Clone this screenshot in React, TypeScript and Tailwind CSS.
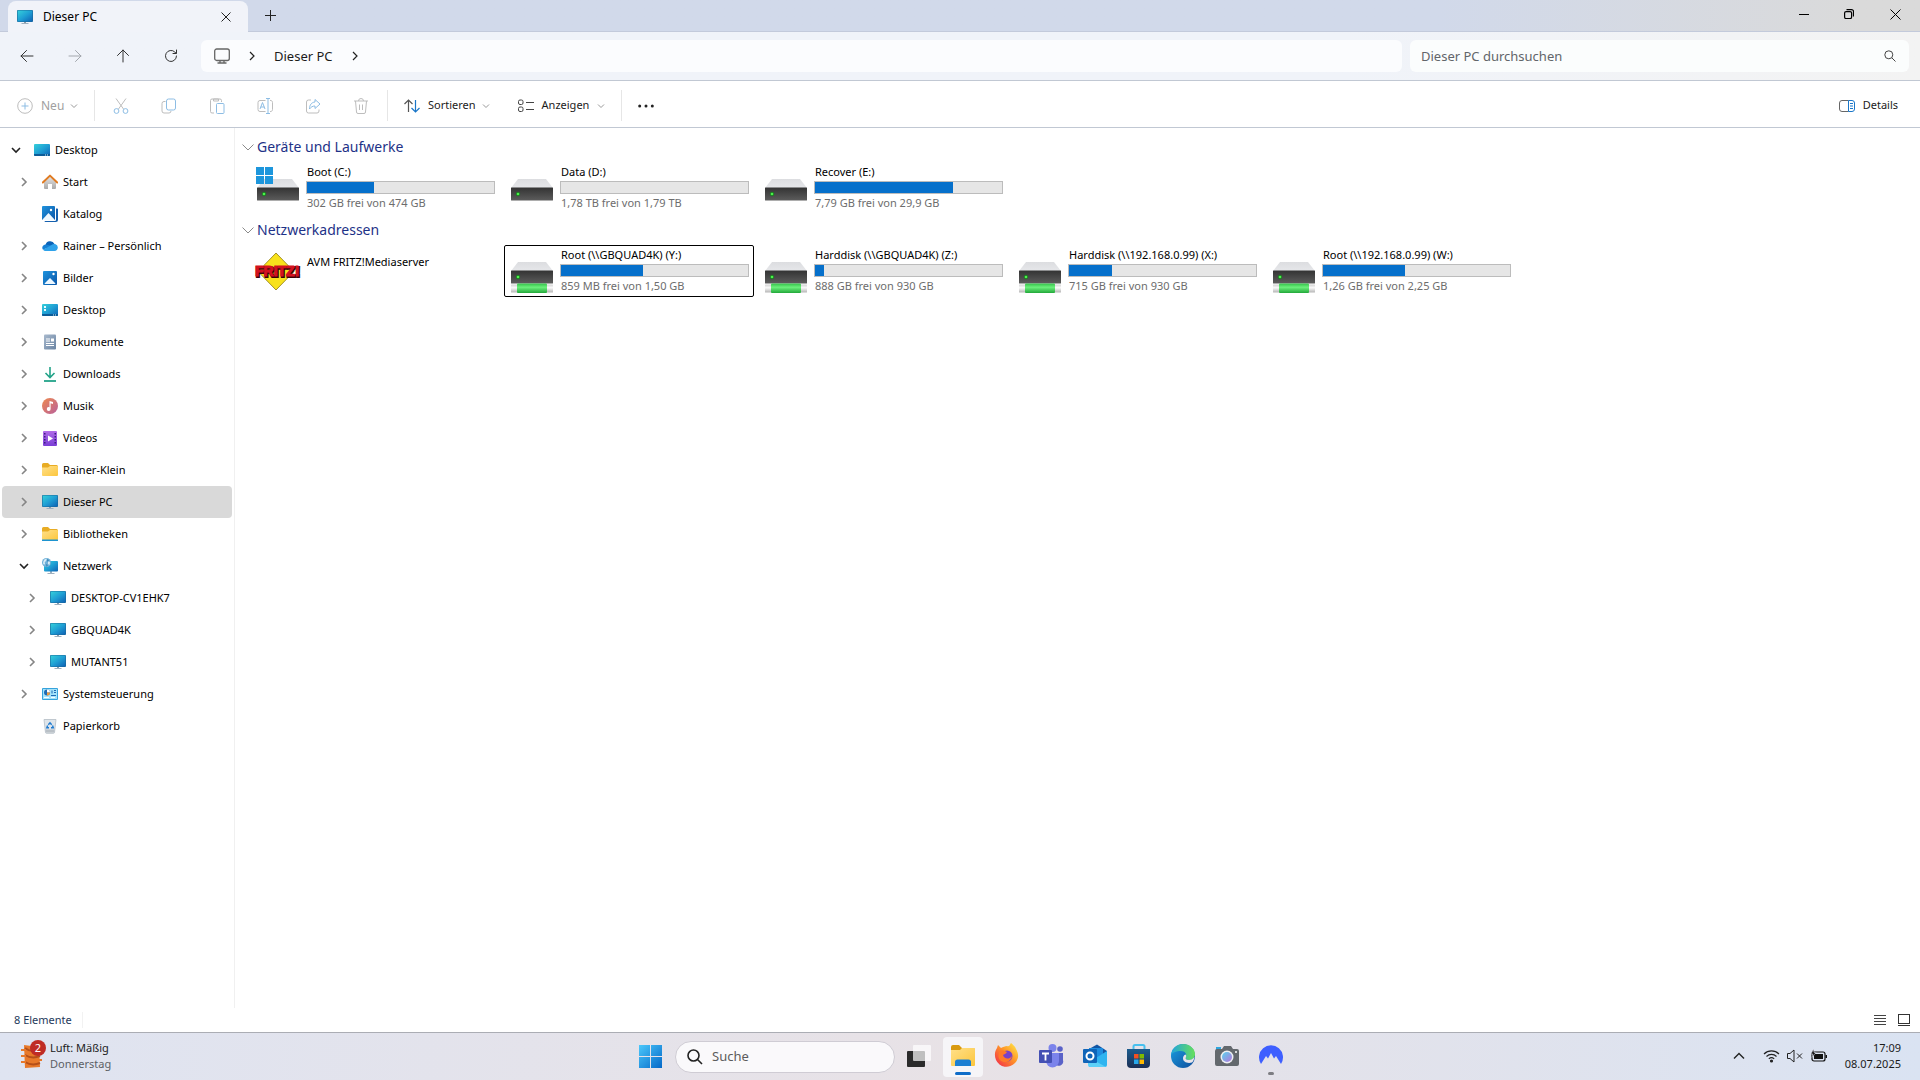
import type { ReactNode } from "react";

interface TreeNode {
  label: string;
  depth: 0 | 1 | 2;
  state: "open" | "closed" | "leaf";
  icon: ReactNode;
  selected?: boolean;
}

interface Volume {
  name: string;
  free?: string;
  used?: number;
  icon: ReactNode;
  focused?: boolean;
}

const indent = { 0: "pl-2", 1: "pl-4", 2: "pl-6" };

/* Shared vector definitions */
const Gradients = () => (
  <svg className="absolute h-0 w-0" aria-hidden="true">
    <defs>
      <linearGradient id="screen" x1="0" y1="0" x2="1" y2="1">
        <stop offset="0" stopColor="#35d0da" />
        <stop offset="0.5" stopColor="#1f9fd4" />
        <stop offset="1" stopColor="#0f62b4" />
      </linearGradient>
      <linearGradient id="folder" x1="0" y1="0" x2="1" y2="1">
        <stop offset="0" stopColor="#ffe08a" />
        <stop offset="1" stopColor="#fcc63d" />
      </linearGradient>
      <linearGradient id="photo" x1="0" y1="0" x2="1" y2="1">
        <stop offset="0" stopColor="#1f93dd" />
        <stop offset="1" stopColor="#0a55a8" />
      </linearGradient>
      <linearGradient id="music" x1="0" y1="0" x2="1" y2="1">
        <stop offset="0" stopColor="#ef8a4e" />
        <stop offset="1" stopColor="#b8609c" />
      </linearGradient>
      <linearGradient id="film" x1="0" y1="0" x2="0" y2="1">
        <stop offset="0" stopColor="#b06be8" />
        <stop offset="1" stopColor="#7a3ed6" />
      </linearGradient>
      <linearGradient id="sheet" x1="0" y1="0" x2="1" y2="1">
        <stop offset="0" stopColor="#a8b9cd" />
        <stop offset="1" stopColor="#6a84a3" />
      </linearGradient>
      <linearGradient id="house" x1="0" y1="0" x2="0" y2="1">
        <stop offset="0" stopColor="#e6e6e6" />
        <stop offset="1" stopColor="#a9a9a9" />
      </linearGradient>
      <linearGradient id="caseFront" x1="0" y1="0" x2="0" y2="1">
        <stop offset="0" stopColor="#333333" />
        <stop offset="1" stopColor="#5c5c5c" />
      </linearGradient>
      <linearGradient id="caseTop" x1="0" y1="0" x2="0" y2="1">
        <stop offset="0" stopColor="#dcdde0" />
        <stop offset="1" stopColor="#e6e7ea" />
      </linearGradient>
      <linearGradient id="cable" x1="0" y1="0" x2="0" y2="1">
        <stop offset="0" stopColor="#34c24a" />
        <stop offset="0.4" stopColor="#6cf07c" />
        <stop offset="1" stopColor="#22a83a" />
      </linearGradient>
      <linearGradient id="plug" x1="0" y1="0" x2="0" y2="1">
        <stop offset="0" stopColor="#d2d2d2" />
        <stop offset="0.4" stopColor="#fafafa" />
        <stop offset="1" stopColor="#b5b5b5" />
      </linearGradient>
      <linearGradient id="win" x1="0" y1="0" x2="1" y2="1">
        <stop offset="0" stopColor="#4cc8fb" />
        <stop offset="1" stopColor="#0468c8" />
      </linearGradient>
      <linearGradient id="fox" x1="1" y1="0" x2="0" y2="1">
        <stop offset="0" stopColor="#fff14a" />
        <stop offset="0.45" stopColor="#ff9528" />
        <stop offset="1" stopColor="#f0204e" />
      </linearGradient>
      <linearGradient id="edgeBody" x1="0" y1="0" x2="1" y2="1">
        <stop offset="0" stopColor="#1ba1e2" />
        <stop offset="1" stopColor="#0f4c9c" />
      </linearGradient>
      <linearGradient id="edgeWave" x1="0" y1="0" x2="1" y2="0">
        <stop offset="0" stopColor="#22a4dd" />
        <stop offset="1" stopColor="#66e05a" />
      </linearGradient>
      <linearGradient id="lens" x1="0" y1="0" x2="1" y2="1">
        <stop offset="0" stopColor="#58d4ee" />
        <stop offset="1" stopColor="#b774dc" />
      </linearGradient>
      <linearGradient id="bag" x1="0" y1="0" x2="0" y2="1">
        <stop offset="0" stopColor="#1c5c8e" />
        <stop offset="1" stopColor="#1b2f55" />
      </linearGradient>
    </defs>
  </svg>
);

/* Small 16px icons */
const PcIcon = () => (
  <svg width="16" height="16" viewBox="0 0 16 16">
    <path d="M7 12h2v2H7z" fill="#8a9aa8" />
    <path d="M4.500 14h7v1h-7z" fill="#9fb0bf" />
    <rect x="0" y="1" width="16" height="12" rx="1" fill="#1a6a9c" />
    <rect x="0.600" y="1.600" width="14.800" height="10.800" rx="0.500" fill="url(#screen)" />
  </svg>
);

const DesktopIcon = ({ items = false }: { items?: boolean }) => (
  <svg width="16" height="16" viewBox="0 0 16 16">
    <rect x="0" y="2" width="16" height="12" rx="1" fill="url(#screen)" />
    <path d="M0 12h16v1a1 1 0 0 1-1 1H1a1 1 0 0 1-1-1z" fill="#0c5c98" />
    <path d="M11 12.500h1v1h-1zM13 12.500h1v1h-1z" fill="#cfeefc" />
    {items && <path d="M2 4h2v2H2zM2 7h2v2H2z" fill="#e9fbff" />}
  </svg>
);

const HomeIcon = () => (
  <svg width="16" height="16" viewBox="0 0 16 16">
    <path d="M2 7.500 8 2l6 5.500V14a1 1 0 0 1-1 1h-3v-5H6v5H3a1 1 0 0 1-1-1z" fill="url(#house)" />
    <path d="M0.800 8.500 8 1.600l7.200 6.900" fill="none" stroke="#e07b22" strokeWidth="2" strokeLinejoin="round" strokeLinecap="round" />
  </svg>
);

const PhotoIcon = ({ stack = false }: { stack?: boolean }) => (
  <svg width="16" height="16" viewBox="0 0 16 16">
    {stack && <path d="M14 2.500h1.200a.8.800 0 0 1 .8.800V14a2 2 0 0 1-2 2H3.500a1 1 0 0 1-1-1H13a1 1 0 0 0 1-1z" fill="#1560ae" />}
    <rect x={stack ? 0 : 1} y={stack ? 0 : 1} width={stack ? 13 : 14} height="14" rx="1" fill="url(#photo)" />
    <path d={stack ? "M0.500 13.500 6.500 7l6 6.500-.5.500H1z" : "M2.500 13.500 8 8l5.500 5.500-.5.500H3z"} fill="#eef8ff" />
    <circle cx={stack ? 9 : 11.500} cy="4" r="1.200" fill="#fff" />
  </svg>
);

const CloudIcon = () => (
  <svg width="16" height="16" viewBox="0 0 16 16">
    <path d="M3.500 7a4.800 4.800 0 0 1 9-1L15 10 4 12.500z" fill="#0a63b8" />
    <path d="M3.700 6.500A3.300 3.300 0 0 0 1 11.800l8.500-4z" fill="#1580d4" />
    <path d="M1 11.800C1.800 12.700 2.700 13 3.800 13h8.700a3.500 3.500 0 0 0 .6-6.900c-1.300-.3-2.600 0-3.600.8z" fill="#2ea2ea" />
  </svg>
);

const DocumentIcon = () => (
  <svg width="16" height="16" viewBox="0 0 16 16">
    <rect x="2" y="0.500" width="12" height="15" rx="1" fill="url(#sheet)" />
    <path d="M4 5h4M4 7h4M4 9.500h8M4 11.500h8" stroke="#fff" />
    <path d="M9 4.500h3v3H9z" fill="#fff" />
  </svg>
);

const DownloadIcon = () => (
  <svg width="16" height="16" viewBox="0 0 16 16" fill="none" stroke="#22a389">
    <path d="M8 1v10M3.500 7 8 11.500 12.500 7" strokeWidth="1.600" />
    <path d="M2 15h12" strokeWidth="1.800" />
  </svg>
);

const MusicIcon = () => (
  <svg width="16" height="16" viewBox="0 0 16 16">
    <circle cx="8" cy="8" r="8" fill="url(#music)" />
    <path d="M7.500 3 11 4v2L8.600 5.300V11a1.900 1.900 0 1 1-1.100-1.700z" fill="#fff" />
  </svg>
);

const VideoIcon = () => (
  <svg width="16" height="16" viewBox="0 0 16 16">
    <rect x="1" y="1" width="14" height="15" rx="1" fill="url(#film)" />
    <path d="M2 3h1.500v1.500H2zM2 6h1.500v1.500H2zM2 9h1.500v1.500H2zM2 12h1.500v1.500H2zM12.500 3H14v1.500h-1.500zM12.500 6H14v1.500h-1.500zM12.500 9H14v1.500h-1.500zM12.500 12H14v1.500h-1.500z" fill="#3d1c80" />
    <path d="M6 5.500v6l5-3z" fill="#fff" />
  </svg>
);

const FolderIcon = ({ library = false }: { library?: boolean }) => (
  <svg width="16" height="16" viewBox="0 0 16 16">
    <path d="M0 2.500A1.500 1.500 0 0 1 1.500 1H6l2 2h6.500A1.500 1.500 0 0 1 16 4.500V6H0z" fill="#e8ac24" />
    <path d="M0 5.500h6L8 4h7a1 1 0 0 1 1 1v8a1 1 0 0 1-1 1H1a1 1 0 0 1-1-1z" fill="url(#folder)" />
    {library && <path d="M0 13.500h16V15H0z" fill="#1d93cf" />}
  </svg>
);

const NetworkIcon = () => (
  <svg width="16" height="16" viewBox="0 0 16 16">
    <path d="M8 13h2v2H8zM5.500 15h7v1h-7z" fill="#9fb0bf" />
    <rect x="2" y="3" width="14" height="10.500" rx="1" fill="url(#screen)" />
    <circle cx="4.500" cy="4.500" r="4.500" fill="#6fb0d8" />
    <path d="M1.500 3a4 4 0 0 1 3-2.500C5 2 4 3 3 4s1 2-.5 2.500S.8 5 1.500 3zM6 3l2 1-.5 3L6 6z" fill="#d8ebf5" />
    <path d="M5 1l2 1-1 2-1-1zM4 6l2 1-1.500 2z" fill="#3e87b8" />
  </svg>
);

const ControlPanelIcon = () => (
  <svg width="16" height="16" viewBox="0 0 16 16">
    <rect x="0" y="2" width="16" height="12" rx="1" fill="#36a3dc" />
    <rect x="1" y="3" width="14" height="10" fill="#a5e3fa" />
    <circle cx="5" cy="6.500" r="3" fill="#1e6bb5" />
    <path d="M5 6.500V3.500a3 3 0 0 1 3 3z" fill="#fff" />
    <path d="M5 6.500h3a3 3 0 0 1-3 3z" fill="#f09a3a" />
    <path d="M9.500 4.500h1v3h-1zM12 4h2v1h-2zM12 6h2v1h-2zM9 9h5v1H9z" fill="#1e6bb5" />
    <path d="M2 11h5v1H2zM9 11h4v1H9z" fill="#f7fcff" />
  </svg>
);

const BinIcon = () => (
  <svg width="16" height="16" viewBox="0 0 16 16">
    <path d="M2 1.500h12l-1.500 13a1 1 0 0 1-1 .8h-7a1 1 0 0 1-1-.8z" fill="#dfe5ea" stroke="#b4bdc5" strokeWidth="0.800" />
    <path d="M3.500 11.500h9l-.3 3h-8.400z" fill="#b9c0c6" />
    <path d="M6.300 6.800 8 4.800l1.700 2M10.500 7.500l.8 2.200H9M7 9.800H4.800l.8-2.300" fill="none" stroke="#1f7bd0" strokeWidth="1.400" />
  </svg>
);

const Chevron = ({ open = false }: { open?: boolean }) => (
  <svg width="16" height="16" viewBox="0 0 16 16" fill="none" strokeWidth="1.600">
    <path d={open ? "M4 6l4 4 4-4" : "M6 4l4 4-4 4"} stroke={open ? "#222" : "#858585"} />
  </svg>
);

const DownTick = () => (
  <svg width="8" height="8" viewBox="0 0 8 8" fill="none" stroke="#999">
    <path d="M1 2.500l3 3 3-3" />
  </svg>
);

/* Drive icons, 42px wide */
const DriveIcon = ({ windows = false, network = false }: { windows?: boolean; network?: boolean }) => (
  <svg width="44" height="48" viewBox="0 0 44 48">
    <path d="M8 14h28l7 9H1z" fill="url(#caseTop)" />
    <rect x="1" y="22.500" width="42" height="13" rx="0.500" fill="url(#caseFront)" />
    <circle cx="8" cy="29" r="2.200" fill="#1c7a22" />
    <circle cx="8" cy="29" r="1.300" fill="#4cf04c" />
    {windows && <path d="M0 2h8v8H0zM9 2h8v8H9zM0 11h8v8H0zM9 11h8v8H9z" fill="#1d96dc" />}
    {network && (
      <>
        <rect x="1" y="36.500" width="42" height="8" rx="0.500" fill="url(#plug)" />
        <rect x="7" y="35.500" width="30" height="9.500" rx="1" fill="url(#cable)" />
      </>
    )}
  </svg>
);

const FritzIcon = () => (
  <svg width="50" height="40" viewBox="0 0 50 40">
    <path d="M23 1 41 19.500 23 38 5 19.500z" fill="#f8e21c" stroke="#8d7a10" strokeWidth="0.800" />
    <g fontFamily="'Liberation Sans', sans-serif" fontWeight="700" fontSize="14">
      <text x="3" y="25" fill="#3a0508" stroke="#3a0508" strokeWidth="2">FRITZ!</text>
      <text x="2" y="24" fill="#d41220" stroke="#d41220" strokeWidth="1">FRITZ!</text>
    </g>
  </svg>
);

const tree: TreeNode[] = [
  { label: "Desktop", depth: 0, state: "open", icon: <DesktopIcon /> },
  { label: "Start", depth: 1, state: "closed", icon: <HomeIcon /> },
  { label: "Katalog", depth: 1, state: "leaf", icon: <PhotoIcon stack /> },
  { label: "Rainer – Persönlich", depth: 1, state: "closed", icon: <CloudIcon /> },
  { label: "Bilder", depth: 1, state: "closed", icon: <PhotoIcon /> },
  { label: "Desktop", depth: 1, state: "closed", icon: <DesktopIcon items /> },
  { label: "Dokumente", depth: 1, state: "closed", icon: <DocumentIcon /> },
  { label: "Downloads", depth: 1, state: "closed", icon: <DownloadIcon /> },
  { label: "Musik", depth: 1, state: "closed", icon: <MusicIcon /> },
  { label: "Videos", depth: 1, state: "closed", icon: <VideoIcon /> },
  { label: "Rainer-Klein", depth: 1, state: "closed", icon: <FolderIcon /> },
  { label: "Dieser PC", depth: 1, state: "closed", icon: <PcIcon />, selected: true },
  { label: "Bibliotheken", depth: 1, state: "closed", icon: <FolderIcon library /> },
  { label: "Netzwerk", depth: 1, state: "open", icon: <NetworkIcon /> },
  { label: "DESKTOP-CV1EHK7", depth: 2, state: "closed", icon: <PcIcon /> },
  { label: "GBQUAD4K", depth: 2, state: "closed", icon: <PcIcon /> },
  { label: "MUTANT51", depth: 2, state: "closed", icon: <PcIcon /> },
  { label: "Systemsteuerung", depth: 1, state: "closed", icon: <ControlPanelIcon /> },
  { label: "Papierkorb", depth: 1, state: "leaf", icon: <BinIcon /> },
];

const drives: Volume[] = [
  { name: "Boot (C:)", free: "302 GB frei von 474 GB", used: 36, icon: <DriveIcon windows /> },
  { name: "Data (D:)", free: "1,78 TB frei von 1,79 TB", used: 0, icon: <DriveIcon /> },
  { name: "Recover (E:)", free: "7,79 GB frei von 29,9 GB", used: 74, icon: <DriveIcon /> },
];

const shares: Volume[] = [
  { name: "AVM FRITZ!Mediaserver", icon: <FritzIcon /> },
  { name: "Root (\\\\GBQUAD4K) (Y:)", free: "859 MB frei von 1,50 GB", used: 44, icon: <DriveIcon network />, focused: true },
  { name: "Harddisk (\\\\GBQUAD4K) (Z:)", free: "888 GB frei von 930 GB", used: 5, icon: <DriveIcon network /> },
  { name: "Harddisk (\\\\192.168.0.99) (X:)", free: "715 GB frei von 930 GB", used: 23, icon: <DriveIcon network /> },
  { name: "Root (\\\\192.168.0.99) (W:)", free: "1,26 GB frei von 2,25 GB", used: 44, icon: <DriveIcon network /> },
];

const TabBar = () => (
  <div className="flex h-8 items-end bg-linear-to-r from-[#d1d9ea] from-75% to-[#dadada] to-97% border-b border-[#c3cadb] pl-2">
    <div className="flex h-[31px] w-60 -mb-px items-center rounded-t-lg bg-[#f1f3f9] pl-[9px] pr-[14px]">
      <PcIcon />
      <span className="ml-[10px] flex-1 text-[12px] text-black">Dieser PC</span>
      <button aria-label="Tab schließen" className="flex h-4 w-4 items-center justify-center">
        <svg width="10" height="10" viewBox="0 0 10 10" stroke="#222" fill="none">
          <path d="M0.500 0.500l9 9M9.500 0.500l-9 9" />
        </svg>
      </button>
    </div>
    <button aria-label="Neuer Tab" className="ml-[6px] flex h-8 w-8 items-center justify-center">
      <svg width="11" height="11" viewBox="0 0 11 11" stroke="#222" fill="none">
        <path d="M5.500 0v11M0 5.500h11" />
      </svg>
    </button>
    <div className="ml-auto flex h-full items-start pr-px">
      <button aria-label="Minimieren" className="flex h-7 w-[45px] items-center justify-center">
        <svg width="10" height="10" viewBox="0 0 10 10" stroke="#000">
          <path d="M0 5.500h10" />
        </svg>
      </button>
      <button aria-label="Verkleinern" className="flex h-7 w-[45px] items-center justify-center">
        <svg width="10" height="10" viewBox="0 0 10 10" stroke="#000" fill="none" strokeWidth="1.200">
          <rect x="0.600" y="2.600" width="7" height="7" rx="1.500" />
          <path d="M2.500 0.600h5a2 2 0 0 1 2 2v5" />
        </svg>
      </button>
      <button aria-label="Schließen" className="flex h-7 w-12 items-center justify-center">
        <svg width="11" height="11" viewBox="0 0 11 11" stroke="#000" fill="none">
          <path d="M0.500 0.500l10 10M10.500 0.500l-10 10" />
        </svg>
      </button>
    </div>
  </div>
);

const NavButton = ({ label, children, disabled }: { label: string; children: ReactNode; disabled?: boolean }) => (
  <button aria-label={label} disabled={disabled} className="flex h-8 w-12 items-center justify-center text-[#333] disabled:text-[#a3a7ad]">
    <svg width="14" height="14" viewBox="0 0 14 14" fill="none" stroke="currentColor" strokeLinecap="round" strokeLinejoin="round">
      {children}
    </svg>
  </button>
);

const PathArrow = () => (
  <svg width="6" height="10" viewBox="0 0 6 10" fill="none" stroke="#222" strokeWidth="1.200">
    <path d="M1 1l4 4-4 4" />
  </svg>
);

const NavBar = () => (
  <div className="flex h-[49px] items-center border-b border-[#c1c8d3] bg-linear-to-r from-[#f0f3f9] from-70% to-[#f3f3f3] pl-[3px] pr-[11px]">
    <NavButton label="Zurück">
      <path d="M13 7H1M6.500 1.500 1 7l5.500 5.500" />
    </NavButton>
    <NavButton label="Vorwärts" disabled>
      <path d="M1 7h12M7.500 1.500 13 7l-5.500 5.500" />
    </NavButton>
    <NavButton label="Nach oben">
      <path d="M7 13V1M1.500 6.500 7 1l5.500 5.500" />
    </NavButton>
    <NavButton label="Aktualisieren">
      <path d="M12.500 7A5.500 5.500 0 1 1 10.800 3L12 4.200M12.500 1v3.500H9" />
    </NavButton>
    <nav className="ml-[6px] flex h-8 flex-1 items-center rounded-md bg-[#fbfcfe] pl-[13px]">
      <svg width="16" height="16" viewBox="0 0 16 16" fill="none" stroke="#666" strokeWidth="1.300">
        <rect x="0.700" y="1" width="14.600" height="11.500" rx="2" />
        <path d="M6 12.500v2M10 12.500v2M3.500 15h9" />
      </svg>
      <span className="ml-[19px]"><PathArrow /></span>
      <a href="#dieser-pc" className="ml-[19px] pt-px text-[13px] text-[#1b1b1b]">Dieser PC</a>
      <span className="ml-[19px]"><PathArrow /></span>
    </nav>
    <label className="ml-2 flex h-8 w-[499px] items-center rounded-md bg-[#fbfdfd] pl-[11px] pr-[13px]">
      <input
        type="text"
        aria-label="Dieser PC durchsuchen"
        placeholder="Dieser PC durchsuchen"
        className="min-w-0 flex-1 pt-px text-[13px] outline-none placeholder:text-[#62656a]"
      />
      <svg width="12" height="12" viewBox="0 0 12 12" fill="none" stroke="#444">
        <circle cx="4.800" cy="4.800" r="4" />
        <path d="M7.800 7.800l3.700 3.700" />
      </svg>
    </label>
  </div>
);

const ToolIcon = ({ label, children }: { label: string; children: ReactNode }) => (
  <button aria-label={label} disabled className="flex h-8 w-12 items-center justify-center">
    <svg width="16" height="16" viewBox="0 0 16 16" fill="none" stroke="#bdbdbd">
      {children}
    </svg>
  </button>
);

const Divider = () => <div className="h-[31px] w-px bg-[#e6e6e6]" />;

const Toolbar = () => (
  <div className="flex h-[47px] items-center border-b border-[#c1c8d3] bg-white pt-[3px] pr-[22px] text-[11px] text-[#1b1b1b]">
    <button disabled className="flex h-8 w-[94px] items-center pl-[17px] text-[#a0a0a0]">
      <svg width="16" height="16" viewBox="0 0 16 16" fill="none">
        <circle cx="8" cy="8" r="7.300" stroke="#bdbdbd" />
        <path d="M8 4.500v7M4.500 8h7" stroke="#8dbde4" />
      </svg>
      <span className="ml-2 mr-[6px] text-[12px]">Neu</span>
      <DownTick />
    </button>
    <Divider />
    <div className="flex px-[2px]">
      <ToolIcon label="Ausschneiden">
        <path d="M3 0.500 10.500 11M13 0.500 5.500 11" />
        <g stroke="#8dbde4">
          <circle cx="3.500" cy="13" r="2.400" />
          <circle cx="12.500" cy="13" r="2.400" />
        </g>
      </ToolIcon>
      <ToolIcon label="Kopieren">
        <path d="M4.500 3.500H3a2 2 0 0 0-2 2V13a2 2 0 0 0 2 2h5a2 2 0 0 0 2-2" />
        <rect x="5.500" y="1" width="9" height="11" rx="2" stroke="#8dbde4" />
      </ToolIcon>
      <ToolIcon label="Einfügen">
        <path d="M5 15H3a1.500 1.500 0 0 1-1.500-1.500v-11A1.500 1.500 0 0 1 3 1h8a1.500 1.500 0 0 1 1.500 1.500V4M4.500 1v2h5V1z" />
        <rect x="7.500" y="5.500" width="7.500" height="10" rx="1" stroke="#8dbde4" />
      </ToolIcon>
      <ToolIcon label="Umbenennen">
        <path d="M8.500 2.500H3a2 2 0 0 0-2 2v7a2 2 0 0 0 2 2h5.500M13 2.500a2 2 0 0 1 2.500 2v7a2 2 0 0 1-2.500 2" />
        <path d="M9 0.500h4M9 15.500h4M11 0.500v15M3 11l2.500-6.500L8 11M3.800 9h3.400" stroke="#8dbde4" />
      </ToolIcon>
      <ToolIcon label="Freigeben">
        <path d="M6 2H3.500a2 2 0 0 0-2 2v9a2 2 0 0 0 2 2H12a2 2 0 0 0 2-2v-1.500" />
        <path d="M10 1.500 15 6l-5 4.500V8C7.500 8 6 9 4.500 11 4.500 7 6.500 4.300 10 4z" stroke="#8dbde4" strokeLinejoin="round" />
      </ToolIcon>
      <ToolIcon label="Löschen">
        <path d="M1 3h14M5.500 3a2.500 2.500 0 0 1 5 0M2.500 3l1 11a1.500 1.500 0 0 0 1.500 1.500h6a1.500 1.500 0 0 0 1.500-1.500l1-11M6.500 6.500v5.500M9.500 6.500v5.500" />
      </ToolIcon>
    </div>
    <Divider />
    <button className="ml-4 flex h-8 items-center">
      <svg width="16" height="14" viewBox="0 0 16 14" fill="none" strokeWidth="1.200">
        <path d="M4.500 13V1M0.500 5l4-4 4 4" stroke="#555" />
        <path d="M11.500 1v12M7.500 9l4 4 4-4" stroke="#1976c8" />
      </svg>
      <span className="ml-2 mr-[6px]">Sortieren</span>
      <DownTick />
    </button>
    <button className="ml-7 flex h-8 items-center">
      <svg width="16" height="14" viewBox="0 0 16 14" fill="none" stroke="#444">
        <rect x="0.500" y="1" width="4.500" height="4.500" rx="1.500" />
        <rect x="0.500" y="8" width="4.500" height="4.500" rx="1.500" />
        <path d="M8 3.500h8M8 10.500h8" />
      </svg>
      <span className="ml-2 mr-2">Anzeigen</span>
      <DownTick />
    </button>
    <span className="ml-4"><Divider /></span>
    <button aria-label="Mehr" className="ml-2 flex h-8 w-8 items-center justify-center">
      <svg width="16" height="4" viewBox="0 0 16 4" fill="#222">
        <circle cx="1.700" cy="2" r="1.500" />
        <circle cx="8" cy="2" r="1.500" />
        <circle cx="14.300" cy="2" r="1.500" />
      </svg>
    </button>
    <button className="ml-auto flex h-8 items-center gap-2">
      <svg width="16" height="12" viewBox="0 0 16 12" fill="none">
        <path d="M9.500 0.500H3a2.500 2.500 0 0 0-2.500 2.500v6A2.500 2.500 0 0 0 3 11.500h6.500" stroke="#666" />
        <path d="M9.500 0.500H13A2.500 2.500 0 0 1 15.500 3v6a2.500 2.500 0 0 1-2.500 2.500H9.500zM11 3.500h3M11 6h3M11 8.500h3" stroke="#1976c8" />
      </svg>
      <span>Details</span>
    </button>
  </div>
);

const TreeRow = ({ node }: { node: TreeNode }) => (
  <li className={`flex h-8 items-center rounded-sm ${indent[node.depth]} ${node.selected ? "bg-[#d9d9d9]" : ""}`}>
    {node.state === "leaf" ? (
      <span className="w-4" />
    ) : (
      <button aria-label={`${node.label} umschalten`} className="-ml-[2px] mr-[2px]">
        <Chevron open={node.state === "open"} />
      </button>
    )}
    <a href="#ordner" className="ml-2 flex items-center gap-[5px] whitespace-nowrap text-[11px] text-black">
      {node.icon}
      {node.label}
    </a>
  </li>
);

const Tile = ({ volume }: { volume: Volume }) => (
  <button
    className={`flex h-[52px] w-[250px] rounded-xs border pl-[2px] pr-1 text-left text-[11px] leading-4 text-black ${
      volume.focused ? "border-black" : "border-transparent"
    }`}
  >
    <span className="flex h-full w-[50px] shrink-0 items-center justify-center pt-[2px]">{volume.icon}</span>
    {volume.free ? (
      <span className="ml-[3px] flex flex-1 flex-col pt-px">
        <span className="whitespace-nowrap pl-px">{volume.name}</span>
        <span className="mt-px flex h-[13px] border border-[#bcbcbc] bg-[#e6e6e6]">
          <span className="bg-[#0670cb]" style={{ width: `${volume.used}%` }} />
        </span>
        <span className="mt-px whitespace-nowrap pl-px text-[#6d6d6d]">{volume.free}</span>
      </span>
    ) : (
      <span className="ml-[3px] whitespace-nowrap pt-2 pl-px">{volume.name}</span>
    )}
  </button>
);

const Group = ({ title, volumes }: { title: string; volumes: Volume[] }) => (
  <section className="flex flex-col gap-[2px]">
    <h2 className="flex h-[27px] items-center text-[14px] text-[#1e3287]">
      <svg width="12" height="12" viewBox="0 0 12 12" fill="none" stroke="#8a8a8a" className="mr-[3px]">
        <path d="M0.500 3.500 6 9l5.500-5.500" />
      </svg>
      {title}
    </h2>
    <div className="flex flex-wrap gap-1 pl-2">
      {volumes.map((v) => (
        <Tile key={v.name} volume={v} />
      ))}
    </div>
  </section>
);

const StatusBar = () => (
  <footer className="flex h-6 items-center pl-[14px] pr-[10px] text-[11px] text-[#1e395b]">
    <span className="border-r border-[#f2f2f2] pr-[10px]">8 Elemente</span>
    <div className="ml-auto flex items-center gap-3">
      <button aria-label="Detailansicht">
        <svg width="12" height="12" viewBox="0 0 12 12" stroke="#444">
          <path d="M0 1.500h12M0 4.500h12M0 7.500h12M0 10.500h12" />
        </svg>
      </button>
      <button aria-label="Symbolansicht">
        <svg width="12" height="12" viewBox="0 0 12 12" stroke="#333" fill="none">
          <rect x="0.500" y="0.500" width="11" height="9" />
          <path d="M0 11.500h12" />
        </svg>
      </button>
    </div>
  </footer>
);

const TaskButton = ({ label, children, active }: { label: string; children: ReactNode; active?: boolean }) => (
  <button
    aria-label={label}
    className={`flex h-10 w-10 items-center justify-center rounded ${active ? "bg-[#f6f5f8]" : ""}`}
  >
    <svg width="28" height="40" viewBox="0 0 28 40">
      {children}
    </svg>
  </button>
);

const Taskbar = () => (
  <div className="grid h-12 grid-cols-[1fr_auto_1fr] items-center border-t border-[#abadb4] bg-linear-to-r from-[#dfe4f1] via-[#e8e2e6] to-[#dae3f2] pl-[2px] text-[11px] leading-4 text-[#1b1b1b]">
    <button className="flex items-center gap-2 justify-self-start pl-[18px] pb-[2px] text-left">
      <svg width="26" height="32" viewBox="0 0 26 32" className="-mr-1">
        <path d="M4 5l15 2 1 20-15 1z" fill="#e8792a" />
        <path d="M5 8c5 4 10 3 15 2M5 15c5 3 10 3 15 1M5 22c5 3 10 3 15 1" fill="none" stroke="#b5501a" strokeWidth="2" />
        <path d="M1 10h5M1 16h5M1 22h5M18 14h4M18 20h4" stroke="#e8792a" strokeWidth="2" />
        <circle cx="18" cy="8" r="8" fill="#bf2c25" />
        <text x="18" y="12" fontSize="11" textAnchor="middle" fill="#fff">2</text>
      </svg>
      <span>
        <span className="block">Luft: Mäßig</span>
        <span className="block text-[#5c5f66]">Donnerstag</span>
      </span>
    </button>

    <div className="flex items-center gap-1">
      <TaskButton label="Start">
        <path d="M2 8h11v11H2zM14 8h11v11H14zM2 20h11v11H2zM14 20h11v11H14z" fill="url(#win)" />
      </TaskButton>
      <label className="flex h-8 w-[220px] items-center rounded-full border border-[#cfccd4] bg-[#faf9fb] pl-[11px]">
        <svg width="16" height="16" viewBox="0 0 16 16" fill="none" stroke="#222" strokeWidth="1.600">
          <circle cx="6.500" cy="6.500" r="5.500" />
          <path d="M10.500 10.500l4.500 4.500" />
        </svg>
        <input type="text" aria-label="Suche" placeholder="Suche" className="ml-[9px] w-40 pb-px text-[13px] outline-none placeholder:text-[#5c5c5c]" />
      </label>
      <TaskButton label="Aktive Anwendungen">
        <rect x="2" y="14" width="18" height="16" rx="1" fill="#2a2a2a" />
        <rect x="8" y="8" width="18" height="16" rx="1" fill="#ffffff" fillOpacity="0.700" />
      </TaskButton>
      <TaskButton label="Explorer" active>
        <path d="M2 10a2 2 0 0 1 2-2h6l3 3h11a2 2 0 0 1 2 2v3H2z" fill="#d99a10" />
        <path d="M2 13h9l2-2h12a1 1 0 0 1 1 1v16a1 1 0 0 1-1 1H3a1 1 0 0 1-1-1z" fill="url(#folder)" />
        <path d="M6 25a2.500 2.500 0 0 1 2.500-2.500h11A2.500 2.500 0 0 1 22 25v4H6z" fill="#1c7fd2" />
        <rect x="6" y="35" width="16" height="3" rx="1.500" fill="#0f6cc8" />
      </TaskButton>
      <TaskButton label="Firefox">
        <path d="M14 9c3 1 3-2 4-3 2 2 4 3 5 6 3 5 3 10-1 14a11.500 11.500 0 0 1-19-3C1 18 2 14 4 11l1-3 3 3c2-1 4-2 6-2z" fill="url(#fox)" />
        <circle cx="14" cy="19" r="5.500" fill="#7a42c8" />
        <path d="M7 14c3-1 5 0 7 1-1 2-3 2-4 3 1 4 6 5 9 1-1 6-8 8-12 4-2-2-2-6 0-9z" fill="#ff7a2a" />
      </TaskButton>
      <TaskButton label="Teams">
        <circle cx="23" cy="12" r="2.800" fill="#5a62c8" />
        <circle cx="15.500" cy="11" r="4" fill="#7b83eb" />
        <path d="M18 16h8v7a4 4 0 0 1-8 3z" fill="#5a62c8" />
        <path d="M9 16h13v8a6.500 6.500 0 0 1-13 0z" fill="#7b83eb" />
        <rect x="2" y="13" width="13" height="13" rx="1" fill="#4450b4" />
        <path d="M5 16.500h7M8.500 16.500v7" stroke="#fff" strokeWidth="1.800" />
      </TaskButton>
      <TaskButton label="Outlook">
        <path d="M8 12 16 7.500 26 14v3H8z" fill="#1256a4" />
        <path d="M8 11h14v12H8z" fill="#1f8de0" />
        <path d="M26 14v14a2 2 0 0 1-2 2H8l2-6z" fill="#2fb4f0" />
        <path d="M7 20l18 10H9a2 2 0 0 1-2-2z" fill="#5cd0f8" />
        <rect x="2" y="12" width="14" height="14" rx="1" fill="#0f64b8" />
        <circle cx="9" cy="19" r="3.500" fill="none" stroke="#fff" strokeWidth="2" />
      </TaskButton>
      <TaskButton label="Microsoft Store">
        <path d="M8.500 13V9.500A1.500 1.500 0 0 1 10 8h8a1.500 1.500 0 0 1 1.500 1.500V13" fill="none" stroke="#48c0ee" strokeWidth="2" />
        <path d="M2 12h23v15a4 4 0 0 1-4 4H6a4 4 0 0 1-4-4z" fill="url(#bag)" />
        <path d="M9 17h4.500v4.500H9z" fill="#f25022" />
        <path d="M14.500 17H19v4.500h-4.500z" fill="#7fba00" />
        <path d="M9 22.500h4.500V27H9z" fill="#28a8ea" />
        <path d="M14.500 22.500H19V27h-4.500z" fill="#ffb900" />
      </TaskButton>
      <TaskButton label="Edge">
        <circle cx="14" cy="19" r="12" fill="url(#edgeBody)" />
        <path d="M2 18C3 11 8 7 14 7c7 0 12 5 12 10 0 4-3 6-6 6s-4-1-3-3c1-3-1-6-5-6-5 0-9 2-10 4z" fill="url(#edgeWave)" />
        <path d="M17 20c-1 2 0 3 3 3 2 0 4-1 5.500-3-.5 3-1.500 4.500-2.500 5.500-5 1.500-9-1-9-4 0-2 1-3.500 2.500-4 .8.800 1 1.500.5 2.500z" fill="#e7e4e9" />
      </TaskButton>
      <TaskButton label="Kamera">
        <path d="M3 10h5v3H3z" fill="#2fa6de" />
        <path d="M4 12h5l2-3h7l2 3h4a2 2 0 0 1 2 2v13a2 2 0 0 1-2 2H4a2 2 0 0 1-2-2V14a2 2 0 0 1 2-2z" fill="#63686d" />
        <circle cx="14" cy="20" r="6.500" fill="#eef0f2" />
        <circle cx="14" cy="20" r="5" fill="url(#lens)" />
        <circle cx="23" cy="15" r="1" fill="#fff" />
      </TaskButton>
      <TaskButton label="NordVPN">
        <path d="M4 27a12 12 0 1 1 20 0l-5-8-2 2.500-3-5.500-3 5.500L9 19z" fill="#3e5fff" />
        <rect x="11" y="35" width="6" height="3" rx="1.500" fill="#7d7d82" />
      </TaskButton>
    </div>

    <div className="flex items-center justify-self-end pb-px pr-[19px]">
      <button aria-label="Ausgeblendete Symbole" className="mr-[18px]">
        <svg width="12" height="8" viewBox="0 0 12 8" fill="none" stroke="#222" strokeWidth="1.400">
          <path d="M1 6.500l5-5 5 5" />
        </svg>
      </button>
      <button aria-label="WLAN, Ton und Akku" className="mr-[17px] flex items-center gap-[7px]">
        <svg width="17" height="14" viewBox="0 0 17 14" fill="none" stroke="#222" strokeWidth="1.100">
          <path d="M1 5a10.500 10.500 0 0 1 15 0M3.500 7.500a7 7 0 0 1 10 0M5.800 9.800a4 4 0 0 1 5.400 0" />
          <circle cx="8.500" cy="12" r="1" fill="#222" />
        </svg>
        <svg width="16" height="14" viewBox="0 0 16 14" fill="none" stroke="#222" strokeLinejoin="round">
          <path d="M0.500 4.500h2.500l4-3.500v12l-4-3.500H0.500zM10 4.500l5 5M15 4.500l-5 5" />
        </svg>
        <svg width="18" height="14" viewBox="0 0 18 14">
          <rect x="2" y="3" width="13" height="9" rx="2" fill="none" stroke="#111" strokeWidth="1.200" />
          <rect x="4" y="5" width="9" height="5" fill="#111" />
          <path d="M15.500 6H17v3h-1.500z" fill="#111" />
          <path d="M3.500 0 1 5h2L2 8.500 6 3.500H4z" fill="#111" stroke="#e0e5f1" strokeWidth="0.500" />
        </svg>
      </button>
      <button className="text-right">
        <span className="block">17:09</span>
        <span className="block">08.07.2025</span>
      </button>
    </div>
  </div>
);

const App = () => (
  <div className="flex min-h-screen flex-col bg-white font-['Noto_Sans','Open_Sans',sans-serif]">
    <Gradients />
    <TabBar />
    <NavBar />
    <Toolbar />
    <div className="flex flex-1">
      <aside className="w-[235px] border-r border-[#f0f0f0] pt-[6px] pl-[2px] pr-[2px]">
        <ul>
          {tree.map((node, i) => (
            <TreeRow key={i} node={node} />
          ))}
        </ul>
      </aside>
      <main className="flex min-w-0 flex-1 flex-col gap-[2px] pt-[5px] pl-[7px]">
        <Group title="Geräte und Laufwerke" volumes={drives} />
        <Group title="Netzwerkadressen" volumes={shares} />
      </main>
    </div>
    <StatusBar />
    <Taskbar />
  </div>
);

export default App;
